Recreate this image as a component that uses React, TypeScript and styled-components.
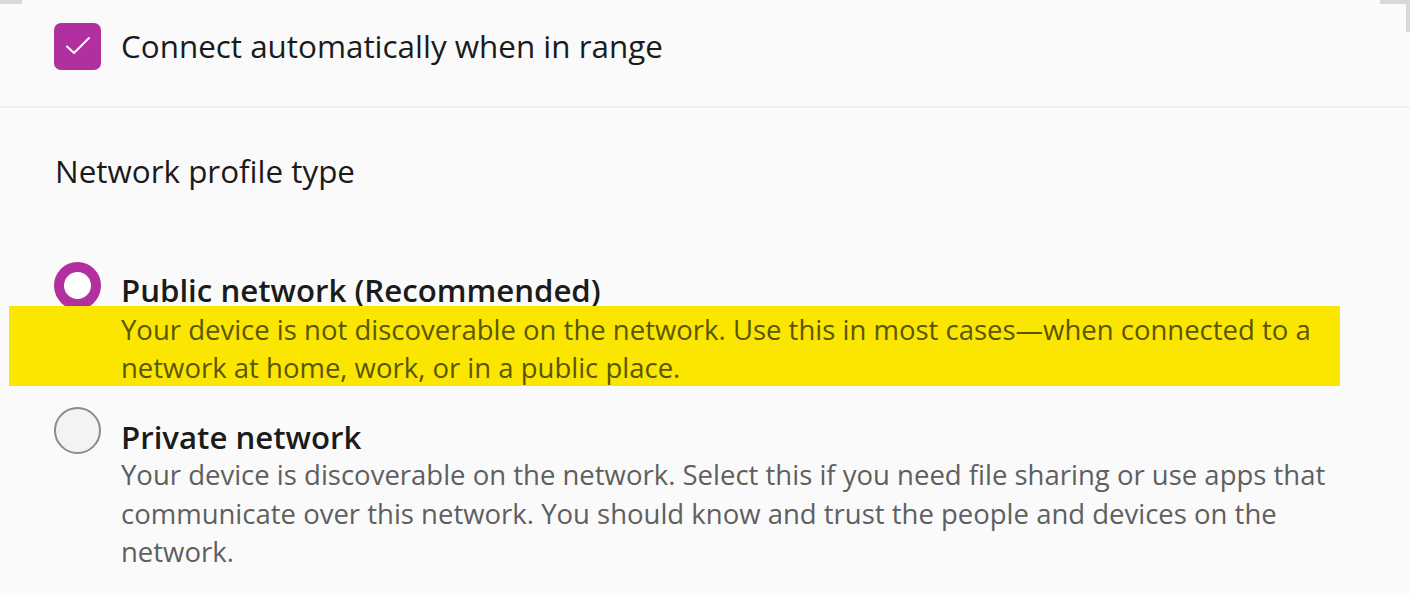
import React from "react";
import styled, { createGlobalStyle } from "styled-components";

const Global = createGlobalStyle`
  html, body { margin: 0; padding: 0; background: #fafafa; }
  body { font-family: "Open Sans", "Noto Sans", sans-serif; color: #1b1b1b; }
  * { box-sizing: border-box; }
`;

const Page = styled.div`
  width: 1410px;
  height: 593px;
  overflow: hidden;
  background: #fafafa;
  position: relative;
`;

const CheckRow = styled.div`
  display: flex;
  align-items: center;
  gap: 20px;
  height: 106px;
  padding-left: 54px;
  padding-bottom: 14px;
`;

const CheckBox = styled.div`
  width: 47px;
  height: 47px;
  border-radius: 7px;
  background: #b12f9e;
  display: flex;
  align-items: center;
  justify-content: center;
  flex-shrink: 0;
`;

const Label = styled.span`
  font-size: 31.4px;
  line-height: 38px;
  color: #1b1b1b;
`;

const Divider = styled.div`
  height: 2px;
  background: #efefef;
`;

const Heading = styled.div`
  font-size: 31.4px;
  line-height: 38px;
  padding: 44px 0 0 55px;
  color: #1b1b1b;
`;

const Options = styled.div`
  display: flex;
  flex-direction: column;
  gap: 32px;
  padding: 81px 0 0 54px;
`;

const Option = styled.div`
  display: grid;
  grid-template-columns: 47px 1fr;
  column-gap: 20px;
  align-items: start;
`;

const Radio = styled.div<{ $checked?: boolean }>`
  width: 47px;
  height: 47px;
  border-radius: 50%;
  margin-top: ${(p) => (p.$checked ? "-9px" : "-11px")};
  ${(p) =>
    p.$checked
      ? `border: 10px solid #b12f9e; background: #ffffff; box-shadow: 0 2px 0 -1px #d0602a;`
      : `border: 2px solid #8a8a8a; background: #f3f3f3;`}
`;

const Texts = styled.div`
  display: flex;
  flex-direction: column;
`;

const Title = styled.div`
  font-size: 31.2px;
  line-height: 38px;
  font-weight: 600;
  color: #1b1b1b;
`;

const Desc = styled.div`
  font-size: 27.5px;
  line-height: 38.5px;
  color: #5f5f5f;
  white-space: nowrap;
`;

const Highlight = styled.div`
  background: #fae600;
  margin-left: -112px;
  padding: 5px 0 0 112px;
  width: 1331px;
  height: 80px;
  margin-top: -3px;
  color: #5a5600;
  font-size: 27.5px;
  line-height: 38px;
  white-space: nowrap;
`;

const CornerMark = styled.div<{ $right?: boolean }>`
  position: absolute;
  top: 0;
  ${(p) =>
    p.$right
      ? `right: 0; width: 30px; height: 32px; border-top: 4px solid #d8d8d8; border-right: 4px solid #d8d8d8;`
      : `left: 0; width: 22px; height: 4px; background: #d8d8d8;`}
`;

export default function App() {
  return (
    <Page>
      <Global />
      <CornerMark />
      <CornerMark $right />
      <CheckRow>
        <CheckBox>
          <svg width="26" height="20" viewBox="0 0 26 20" fill="none">
            <path d="M2 10.5 L9 17 L24 2" stroke="#fff" strokeWidth="2" strokeLinecap="round" strokeLinejoin="round" />
          </svg>
        </CheckBox>
        <Label>Connect automatically when in range</Label>
      </CheckRow>
      <Divider />
      <Heading>Network profile type</Heading>
      <Options>
        <Option>
          <Radio $checked />
          <Texts>
            <Title>Public network (Recommended)</Title>
            <Highlight>
              Your device is not discoverable on the network. Use this in most cases—when connected to a
              <br />
              network at home, work, or in a public place.
            </Highlight>
          </Texts>
        </Option>
        <Option>
          <Radio />
          <Texts>
            <Title>Private network</Title>
            <Desc>
              Your device is discoverable on the network. Select this if you need file sharing or use apps that
              <br />
              communicate over this network. You should know and trust the people and devices on the
              <br />
              network.
            </Desc>
          </Texts>
        </Option>
      </Options>
    </Page>
  );
}
